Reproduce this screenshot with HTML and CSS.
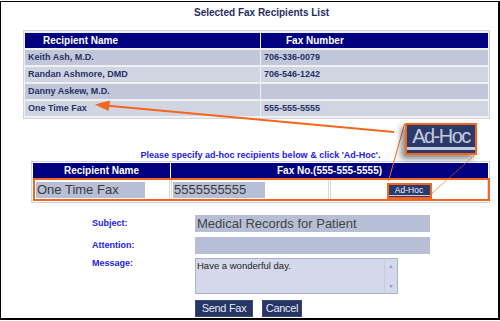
FILE: index.html
```html
<!DOCTYPE html>
<html>
<head>
<meta charset="utf-8">
<link rel="stylesheet" href="styles.css">
</head>
<body>
<div class="frame">
  <h1 class="title">Selected Fax Recipients List</h1>
  <table class="list">
    <colgroup><col class="w-name"><col class="w-fax"></colgroup>
    <thead>
      <tr><th class="h-name">Recipient Name</th><th class="h-fax">Fax Number</th></tr>
    </thead>
    <tbody>
      <tr class="dark"><td>Keith Ash, M.D.</td><td>706-336-0079</td></tr>
      <tr class="light"><td>Randan Ashmore, DMD</td><td>706-546-1242</td></tr>
      <tr class="dark"><td>Danny Askew, M.D.</td><td></td></tr>
      <tr class="light"><td>One Time Fax</td><td>555-555-5555</td></tr>
    </tbody>
  </table>

  <div class="adhoc-wrap">
    <p class="hint">Please specify ad-hoc recipients below &amp; click 'Ad-Hoc'.</p>
    <table class="adhoc">
      <colgroup><col class="a-name"><col class="a-fax"><col class="a-btn"></colgroup>
      <thead>
        <tr><th>Recipient Name</th><th colspan="2">Fax No.(555-555-5555)</th></tr>
      </thead>
      <tbody>
        <tr>
          <td class="cell-name"><input class="field f-name" type="text" value="One Time Fax"></td>
          <td class="cell-fax"><input class="field f-fax" type="text" value="5555555555"></td>
          <td class="cell-btn"><button class="btn-small" type="button">Ad-Hoc</button></td>
        </tr>
      </tbody>
    </table>
  </div>

  <div class="form">
    <label class="lbl">Subject:</label>
    <input class="field f-subject" type="text" value="Medical Records for Patient">
    <label class="lbl">Attention:</label>
    <input class="field f-attn" type="text" value="">
    <label class="lbl lbl-top">Message:</label>
    <div class="ta">
      <textarea class="ta-text">Have a wonderful day.</textarea>
      <div class="ta-scroll"><span class="arr-up"></span><span class="arr-down"></span></div>
    </div>
    <span></span>
    <div class="actions">
      <button class="btn btn-send" type="button">Send Fax</button>
      <button class="btn btn-cancel" type="button">Cancel</button>
    </div>
  </div>

  <svg class="annot" width="500" height="321" viewBox="0 0 500 321">
    <line x1="108" y1="105.8" x2="394" y2="132" stroke="#f4661b" stroke-width="2"/>
    <polygon points="95,104.5 110,100.6 108.6,111" fill="#f4661b"/>
    <rect x="34" y="179" width="455" height="21" fill="none" stroke="#f4661b" stroke-width="2"/>
    <line x1="404.5" y1="124" x2="388.5" y2="181" stroke="#f4661b" stroke-width="1"/>
    <line x1="476" y1="154" x2="430" y2="195" stroke="#f4661b" stroke-width="1" stroke-dasharray="1.5 1"/>
  </svg>
  <div class="callout">Ad-Hoc</div>
</div>
</body>
</html>
```

FILE: styles.css
```css
* { box-sizing: border-box; }

html, body {
  margin: 0;
  padding: 0;
  background: #fff;
}

body {
  font-family: "Liberation Sans", Arial, sans-serif;
}

.frame {
  position: relative;
  margin-top: 1px;
  width: 500px;
  height: 319px;
  border: 1px solid #000;
  border-right-width: 2px;
  border-bottom-width: 2px;
  overflow: hidden;
}

.title {
  margin: 5px 0 0;
  padding-left: 24px;
  font-size: 10px;
  line-height: 12px;
  font-weight: bold;
  text-align: center;
  color: #1f2d5f;
}

/* Selected list */
.list {
  margin: 11px 0 0 22px;
  width: 467px;
  table-layout: fixed;
  border-collapse: separate;
  border-spacing: 1px 2px;
  border: 1px solid #d2d4da;
  background: #eef0f4;
}
.w-name { width: 235px; }

.list th {
  height: 15px;
  padding: 0;
  font-size: 10px;
  line-height: 15px;
  font-weight: bold;
  text-align: left;
  color: #fff;
  background: #000080;
}
.list .h-name { padding-left: 18px; }
.list .h-fax { padding-left: 25px; }

.list td {
  height: 15px;
  padding: 0 0 0 3px;
  font-size: 9px;
  line-height: 15px;
  font-weight: bold;
  color: #1f3366;
  white-space: nowrap;
}
.list .dark td { background: #c1c7d8; }
.list .light td { background: #d1d5e2; }

/* ad-hoc */
.adhoc-wrap {
  margin: 31px 0 0 30px;
  width: 459px;
}
.hint {
  margin: 0;
  font-size: 9px;
  line-height: 11px;
  font-weight: bold;
  text-align: center;
  color: #2222e6;
}
.adhoc {
  width: 459px;
  table-layout: fixed;
  border-collapse: separate;
  border-spacing: 1px;
  border: 1px solid #d2d4da;
  background: #fff;
}
.a-name { width: 137px; }
.a-fax { width: 158px; }

.adhoc th {
  height: 15px;
  padding: 0;
  font-size: 10px;
  line-height: 15px;
  font-weight: bold;
  text-align: center;
  color: #fff;
  background: #000080;
}
.adhoc td {
  height: 22px;
  padding: 0 0 0 2px;
  border: 1px solid #d9dade;
  background: #fff;
  vertical-align: middle;
}
.adhoc .cell-fax { padding-left: 1px; }
.adhoc .cell-btn { padding: 0; text-align: center; }

.field {
  display: block;
  height: 16px;
  margin: 0;
  padding: 0 0 0 1px;
  border: 0;
  background: #b7bfd7;
  font-family: "Liberation Sans", Arial, sans-serif;
  font-size: 13px;
  line-height: 16px;
  color: #3a3a3a;
  outline: none;
}
.f-name { width: 109px; }
.f-fax { width: 92px; }

.btn-small {
  display: inline-block;
  vertical-align: middle;
  width: 41px;
  height: 12px;
  margin: 0;
  padding: 0;
  border: 0;
  border-bottom: 1px solid #2b3a6b;
  background: #2b3a6b;
  box-shadow: inset 0 -1px 0 #c9cde0;
  font-family: "Liberation Sans", Arial, sans-serif;
  font-size: 8.5px;
  line-height: 11px;
  color: #eef0f6;
  outline: 2px solid #f4661b;
}

/* form */
.form {
  display: grid;
  grid-template-columns: 103px auto;
  align-items: center;
  margin: 12px 0 0 91px;
}
.lbl {
  font-size: 9px;
  line-height: 11px;
  font-weight: bold;
  color: #2222e6;
}
.lbl-top { align-self: start; margin-top: 0; }

.f-subject {
  width: 235px;
  height: 17px;
  line-height: 17px;
  padding-left: 2px;
  color: #444;
}
.f-attn {
  width: 235px;
  height: 17px;
  margin-top: 5px;
}
.form .lbl:nth-of-type(2) { margin-top: 5px; }

.ta {
  display: flex;
  width: 203px;
  height: 36px;
  margin-top: 4px;
  border: 1px solid #aab2cb;
  background: #d3d8ea;
}
.lbl-top { margin-top: 4px; }
.ta-text {
  flex: 1;
  margin: 0;
  padding: 1px 1px;
  border: 0;
  background: transparent;
  resize: none;
  overflow: hidden;
  font-family: "Liberation Sans", Arial, sans-serif;
  font-size: 9.5px;
  line-height: 12px;
  color: #222;
  outline: none;
}
.ta-scroll {
  position: relative;
  width: 13px;
  border-left: 1px solid #c6cbdd;
}
.arr-up, .arr-down {
  position: absolute;
  left: 4px;
  width: 0;
  height: 0;
  border-left: 2.5px solid transparent;
  border-right: 2.5px solid transparent;
}
.arr-up { top: 6px; border-bottom: 3px solid #9aa0b2; }
.arr-down { bottom: 5px; border-top: 3px solid #9aa0b2; }

.actions {
  display: flex;
  gap: 9px;
  margin-top: 6px;
}
.btn {
  height: 17px;
  margin: 0;
  padding: 0;
  border: 1px solid #3a4878;
  background: #253566;
  font-family: "Liberation Sans", Arial, sans-serif;
  font-size: 11px;
  line-height: 15px;
  letter-spacing: -0.3px;
  color: #e8eaf3;
}
.btn-send { width: 58px; }
.btn-cancel { width: 40px; }

/* annotations */
.annot {
  position: absolute;
  left: -1px;
  top: -2px;
  pointer-events: none;
}
.callout {
  position: absolute;
  left: 404px;
  top: 121px;
  width: 72px;
  height: 32px;
  border: 2px solid #f4661b;
  background: #2a3a6a;
  box-shadow: inset 0 -3px 0 #2a3a6a, inset 0 -6px 0 #c8cce0, -4px 4px 6px rgba(0, 0, 0, 0.45);
  font-size: 20px;
  line-height: 22px;
  letter-spacing: -1.5px;
  text-align: center;
  color: #c5cade;
}
```
